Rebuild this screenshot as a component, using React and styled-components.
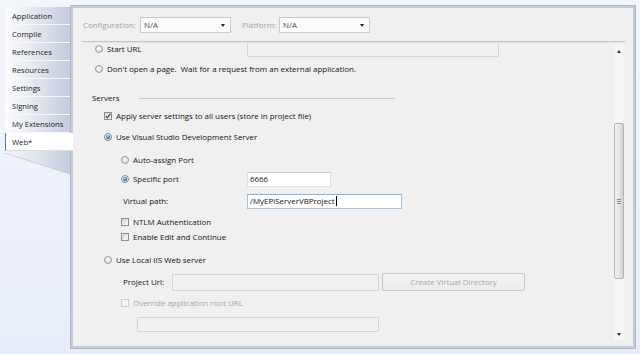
import React from "react";
import styled, { createGlobalStyle, css } from "styled-components";

const GlobalStyle = createGlobalStyle`
  html, body { margin: 0; padding: 0; }
  body {
    width: 640px;
    height: 354px;
    overflow: hidden;
    font-family: "Open Sans", "Segoe UI", sans-serif;
    font-size: 7.95px;
    color: #141414;
    background: linear-gradient(#f3f6fb, #e8eef7);
  }
`;

const Page = styled.div`
  display: flex;
  height: 354px;
  padding-top: 5px;
  box-sizing: border-box;
`;

const Sidebar = styled.div`
  width: 65px;
  margin-left: 5px;
  padding-top: 2px;
  display: flex;
  flex-direction: column;
  flex-shrink: 0;
`;

const Tab = styled.div`
  height: 18px;
  box-sizing: border-box;
  display: flex;
  align-items: center;
  padding-left: 7px;
  white-space: nowrap;
  font-size: 7.7px;
  color: #1e1e1e;
  background: linear-gradient(to right, #fdfdfe, #e4e8f0 45%, #c4cbdc);
  border-bottom: 1px solid #f6f8fb;
  ${(p) =>
    p.$active &&
    css`
      background: #ffffff;
      border-left: 1px solid #3f7fd9;
      border-bottom: 1px solid #d9dde6;
      padding-left: 6px;
      margin-right: -3px;
      position: relative;
      z-index: 1;
    `}
`;

const Panel = styled.div`
  width: 566px;
  height: 344px;
  box-sizing: border-box;
  border: 3px solid #c3cbdc;
  outline: 1px solid #aeb8cd;
  outline-offset: -1px;
  background: #f0f0f0;
  display: flex;
  flex-direction: column;
  flex-shrink: 0;
`;

const Toolbar = styled.div`
  height: 33px;
  display: flex;
  align-items: center;
  padding-left: 10px;
  padding-top: 1px;
  box-sizing: border-box;
  flex-shrink: 0;
`;

const ToolLabel = styled.span`
  width: ${(p) => p.$w}px;
  color: #a4a4a4;
  white-space: nowrap;
`;

const Dropdown = styled.div`
  width: 91px;
  height: 16px;
  box-sizing: border-box;
  border: 1px solid #cbcbcb;
  background: #fbfbfb;
  display: flex;
  align-items: center;
  justify-content: space-between;
  padding: 0 5px 0 3px;
  color: #505050;
  margin-right: ${(p) => p.$mr || 0}px;
`;

const DropArrow = styled.span`
  width: 0;
  height: 0;
  border-left: 2px solid transparent;
  border-right: 2px solid transparent;
  border-top: 3px solid #222;
`;

const Separator = styled.div`
  height: 0;
  border-top: 1px solid #c6c6c6;
  border-bottom: 1px solid #e4e4e4;
  margin: 0 8px 0 9px;
  flex-shrink: 0;
`;

const Viewport = styled.div`
  flex: 1;
  display: flex;
  min-height: 0;
`;

const Content = styled.div`
  flex: 1;
  overflow: hidden;
  display: flex;
  flex-direction: column;
`;

const Row = styled.div`
  display: flex;
  align-items: center;
  height: ${(p) => p.$h || 16}px;
  margin-top: ${(p) => p.$mt || 0}px;
  padding-left: ${(p) => p.$pl || 0}px;
  flex-shrink: 0;
  white-space: nowrap;
`;

const Cell = styled.div`
  width: ${(p) => p.$w}px;
  display: flex;
  align-items: center;
  flex-shrink: 0;
`;

const Text = styled.span`
  color: ${(p) => (p.$disabled ? "#a6a6a6" : "#141414")};
`;

const Radio = styled.span`
  width: 8px;
  height: 8px;
  box-sizing: border-box;
  border-radius: 50%;
  border: 1px solid #999;
  background: radial-gradient(circle at 50% 35%, #fdfdfd, #d4d4d4);
  flex-shrink: 0;
  margin-right: 4px;
  display: flex;
  align-items: center;
  justify-content: center;
  ${(p) =>
    p.$checked &&
    css`
      border-color: #7d8a99;
      &::after {
        content: "";
        width: 4px;
        height: 4px;
        border-radius: 50%;
        background: radial-gradient(circle at 40% 35%, #9ad6ff, #1f72c4 55%, #0c3d7c);
      }
    `}
`;

const Check = styled.span`
  width: 8px;
  height: 8px;
  box-sizing: border-box;
  border: 1px solid ${(p) => (p.$disabled ? "#cdcdcd" : "#8e8f8f")};
  background: ${(p) =>
    p.$disabled ? "#f4f4f4" : "linear-gradient(135deg, #d9d9d9, #f7f7f7)"};
  flex-shrink: 0;
  margin-right: 4px;
  display: flex;
  align-items: center;
  justify-content: center;
`;

const SectionTitle = styled.span`
  width: 47px;
  flex-shrink: 0;
`;

const Rule = styled.div`
  width: 256px;
  border-top: 1px solid #c5c5c5;
`;

const TextBox = styled.div`
  width: ${(p) => p.$w}px;
  height: ${(p) => p.$h || 15}px;
  box-sizing: border-box;
  display: flex;
  align-items: center;
  padding-left: 2px;
  flex-shrink: 0;
  color: #141414;
  background: #ffffff;
  border: 1px solid #e0e2e7;
  border-top-color: #ccced4;
  ${(p) =>
    p.$variant === "focus" &&
    css`
      border: 1px solid #a9c1dd;
      border-top-color: #8eaed4;
    `}
  ${(p) =>
    p.$variant === "disabled" &&
    css`
      background: #f1f1f1;
      border: 1px solid #d4d4d4;
      border-radius: 1px;
    `}
`;

const Caret = styled.span`
  width: 1px;
  height: 10px;
  background: #000;
  margin-left: 1px;
`;

const Button = styled.div`
  width: 143px;
  height: 18px;
  box-sizing: border-box;
  margin-left: 3px;
  border: 1px solid #c7c7c7;
  border-radius: 2px;
  background: linear-gradient(#f5f5f5, #ebebeb);
  color: #a8a8a8;
  display: flex;
  align-items: center;
  justify-content: center;
  flex-shrink: 0;
`;

const Scrollbar = styled.div`
  width: 10px;
  margin: 2px 9px 6px 0;
  display: flex;
  flex-direction: column;
  background: #f6f6f6;
  flex-shrink: 0;
`;

const ScrollArrow = styled.div`
  height: 12px;
  display: flex;
  align-items: center;
  justify-content: center;
  flex-shrink: 0;
  &::after {
    content: "";
    width: 0;
    height: 0;
    border-left: 2px solid transparent;
    border-right: 2px solid transparent;
    ${(p) =>
      p.$dir === "up"
        ? css`border-bottom: 3px solid #333;`
        : css`border-top: 3px solid #333;`}
  }
`;

const ScrollGap = styled.div`
  height: ${(p) => (p.$h ? `${p.$h}px` : "auto")};
  flex: ${(p) => (p.$h ? "0 0 auto" : "1")};
`;

const Thumb = styled.div`
  height: 156px;
  box-sizing: border-box;
  border: 1px solid #b4b4b4;
  border-radius: 2px;
  background: linear-gradient(to right, #f4f4f4, #e3e3e3 55%, #d2d2d2);
  display: flex;
  flex-direction: column;
  align-items: center;
  justify-content: center;
  gap: 1px;
  flex-shrink: 0;
`;

const Grip = styled.span`
  width: 4px;
  height: 1px;
  background: #8a8a8a;
`;

const CheckMark = () => (
  <svg width="6" height="6" viewBox="0 0 6 6">
    <path d="M0.8 3.2 L2.3 4.8 L5.3 0.8" stroke="#2c4a78" strokeWidth="1.2" fill="none" />
  </svg>
);

const TabTail = () => (
  <svg width="65" height="37" viewBox="0 0 65 37">
    <defs>
      <linearGradient id="tailg" x1="0" x2="1" y1="0" y2="0">
        <stop offset="0" stopColor="#f4f6f9" />
        <stop offset="0.5" stopColor="#e1e5ed" />
        <stop offset="1" stopColor="#c5ccdc" />
      </linearGradient>
    </defs>
    <polygon points="0,0 65,0 65,23 0,2" fill="url(#tailg)" />
    <line x1="0" y1="2" x2="65" y2="23" stroke="#c3c9d5" strokeWidth="0.8" />
  </svg>
);

const tabs = ["Application", "Compile", "References", "Resources", "Settings", "Signing", "My Extensions", "Web*"];

export default function App() {
  return (
    <>
      <GlobalStyle />
      <Page>
        <Sidebar>
          {tabs.map((t) => (
            <Tab key={t} $active={t === "Web*"}>
              {t}
            </Tab>
          ))}
          <TabTail />
        </Sidebar>
        <Panel>
          <Toolbar>
            <ToolLabel $w={57}>Configuration:</ToolLabel>
            <Dropdown $mr={11}>
              <span>N/A</span>
              <DropArrow />
            </Dropdown>
            <ToolLabel $w={37}>Platform:</ToolLabel>
            <Dropdown>
              <span>N/A</span>
              <DropArrow />
            </Dropdown>
          </Toolbar>
          <Separator />
          <Viewport>
            <Content>
              <Row $mt={-2} $pl={22}>
                <Cell $w={152}>
                  <Radio />
                  <Text>Start URL</Text>
                </Cell>
                <TextBox $w={252} $h={16} $variant="disabled" />
              </Row>
              <Row $mt={4} $pl={22}>
                <Radio />
                <Text>Don't open a page.&nbsp; Wait for a request from an external application.</Text>
              </Row>
              <Row $mt={13} $pl={19}>
                <SectionTitle>Servers</SectionTitle>
                <Rule />
              </Row>
              <Row $mt={2} $pl={31}>
                <Check>
                  <CheckMark />
                </Check>
                <Text>Apply server settings to all users (store in project file)</Text>
              </Row>
              <Row $mt={5} $pl={31}>
                <Radio $checked />
                <Text>Use Visual Studio Development Server</Text>
              </Row>
              <Row $mt={7} $pl={48}>
                <Radio />
                <Text>Auto-assign Port</Text>
              </Row>
              <Row $mt={3} $pl={48}>
                <Cell $w={126}>
                  <Radio $checked />
                  <Text>Specific port</Text>
                </Cell>
                <TextBox $w={84}>6666</TextBox>
              </Row>
              <Row $mt={6} $pl={50}>
                <Cell $w={124}>
                  <Text>Virtual path:</Text>
                </Cell>
                <TextBox $w={155} $variant="focus">
                  /MyEPiServerVBProject
                  <Caret />
                </TextBox>
              </Row>
              <Row $mt={6} $h={14} $pl={48}>
                <Check />
                <Text>NTLM Authentication</Text>
              </Row>
              <Row $mt={1} $h={14} $pl={48}>
                <Check />
                <Text>Enable Edit and Continue</Text>
              </Row>
              <Row $mt={8} $pl={31}>
                <Radio />
                <Text>Use Local IIS Web server</Text>
              </Row>
              <Row $mt={5} $h={18} $pl={50}>
                <Cell $w={49}>
                  <Text>Project Url:</Text>
                </Cell>
                <TextBox $w={207} $h={17} $variant="disabled" />
                <Button>Create Virtual Directory</Button>
              </Row>
              <Row $mt={5} $h={14} $pl={48}>
                <Check $disabled />
                <Text $disabled>Override application root URL</Text>
              </Row>
              <Row $mt={7} $h={15} $pl={64}>
                <TextBox $w={242} $variant="disabled" />
              </Row>
            </Content>
            <Scrollbar>
              <ScrollArrow $dir="up" />
              <ScrollGap $h={66} />
              <Thumb>
                <Grip />
                <Grip />
                <Grip />
              </Thumb>
              <ScrollGap />
              <ScrollArrow $dir="down" />
            </Scrollbar>
          </Viewport>
        </Panel>
      </Page>
    </>
  );
}
